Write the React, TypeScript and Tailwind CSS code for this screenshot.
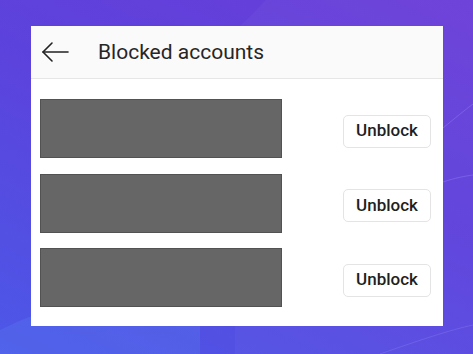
import React from 'react';

const rows = [0, 1, 2];

const BackArrow: React.FC = () => (
  <svg width="28" height="22" viewBox="0 0 28 22" fill="none" stroke="#222" strokeWidth="1.6" strokeLinecap="round" strokeLinejoin="round">
    <path d="M27 11H2" />
    <path d="M11 2L2 11l9 9" />
  </svg>
);

const App: React.FC = () => {
  return (
    <div
      className="relative w-full h-[354px] overflow-hidden bg-[linear-gradient(205deg,#6b3dd8_0%,#5c42dc_45%,#4c58e8_100%)]"
      style={{ fontFamily: 'Roboto, "Noto Sans", sans-serif' }}
    >
      {/* soft wallpaper shapes */}
      <svg className="absolute inset-0" width="473" height="354" viewBox="0 0 473 354">
        <path d="M235 30 C250 18 258 8 266 0 L473 0 L473 354 L235 354 Z" fill="#ffffff" opacity="0.03" />
        <path d="M0 330 C60 300 120 290 200 300 L200 354 L0 354 Z" fill="#5a78ee" opacity="0.35" />
        <path d="M443 128 C455 118 465 110 473 104" stroke="#8a7af0" strokeWidth="1" fill="none" opacity="0.5" />
        <path d="M443 182 C455 178 465 176 473 175" stroke="#8a7af0" strokeWidth="1" fill="none" opacity="0.5" />
        <path d="M380 354 C420 340 450 330 473 325" stroke="#8a7af0" strokeWidth="1" fill="none" opacity="0.4" />
      </svg>

      <div className="relative pt-[26px] pl-[31px]">
        <div className="w-[412px] h-[300px] bg-white flex flex-col">
          <div className="h-[53px] flex items-center bg-[#fafafa] border-b border-[#e6e6e6]">
            <div className="ml-[10px] w-[28px] flex items-center">
              <BackArrow />
            </div>
            <span className="ml-[29px] text-[21px] text-[#262626] leading-none">Blocked accounts</span>
          </div>

          <div className="flex flex-col gap-[15.5px] pt-[20px] pl-[9px] pr-[12px]">
            {rows.map(i => (
              <div key={i} className="flex items-center justify-between">
                <div className="w-[242px] h-[59px] bg-[#666666] border border-[#525252]" />
                <button className="mt-[5px] w-[88px] h-[33px] rounded-[5px] border border-[#e4e4e4] bg-white text-[17px] font-medium text-[#1f1f1f]">
                  Unblock
                </button>
              </div>
            ))}
          </div>
        </div>
      </div>
    </div>
  );
};

export default App;
